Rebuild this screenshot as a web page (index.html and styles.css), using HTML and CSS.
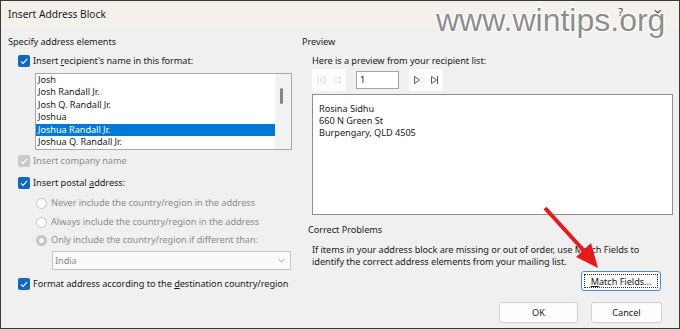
FILE: index.html
```html
<!DOCTYPE html>
<html lang="en">
<head>
    <meta charset="UTF-8">
    <title>Insert Address Block</title>
    <link rel="stylesheet" href="styles.css">
</head>
<body>
    <div class="dialog">
        <div class="titlebar">
            <span class="title">Insert Address Block</span>
            <span class="tb-help">?</span>
            <span class="tb-close">&#x2715;</span>
        </div>

        <div class="content">
            <div class="left">
                <div class="group-label">Specify address elements</div>

                <div class="check-row first">
                    <span class="checkbox"><svg viewBox="0 0 12 12"><path d="M3 6.3 L5.1 8.4 L9.2 3.9"/></svg></span>
                    <span>Insert <u>r</u>ecipient's name in this format:</span>
                </div>

                <div class="listbox">
                    <ul class="items">
                        <li>Josh</li>
                        <li>Josh Randall Jr.</li>
                        <li>Josh Q. Randall Jr.</li>
                        <li>Joshua</li>
                        <li class="selected">Joshua Randall Jr.</li>
                        <li>Joshua Q. Randall Jr.</li>
                    </ul>
                    <div class="scrollbar"><span class="thumb"></span></div>
                </div>

                <div class="check-row company disabled">
                    <span class="checkbox"><svg viewBox="0 0 12 12"><path d="M3 6.3 L5.1 8.4 L9.2 3.9"/></svg></span>
                    <span>Insert company name</span>
                </div>

                <div class="check-row postal">
                    <span class="checkbox"><svg viewBox="0 0 12 12"><path d="M3 6.3 L5.1 8.4 L9.2 3.9"/></svg></span>
                    <span>Insert postal <u>a</u>ddress:</span>
                </div>

                <div class="radio-row r1"><span class="radio"></span><span>Never include the country/region in the address</span></div>
                <div class="radio-row r2"><span class="radio"></span><span>Always include the country/region in the address</span></div>
                <div class="radio-row r3"><span class="radio on"></span><span>Only include the country/region if different than:</span></div>

                <div class="dropdown">
                    <span class="value">India</span>
                    <svg class="chevron" viewBox="0 0 10 6"><path d="M1 1 L5 5 L9 1"/></svg>
                </div>

                <div class="check-row format">
                    <span class="checkbox"><svg viewBox="0 0 12 12"><path d="M3 6.3 L5.1 8.4 L9.2 3.9"/></svg></span>
                    <span>Format address according to the <u>d</u>estination country/region</span>
                </div>
            </div>

            <div class="right">
                <div class="group-label">Preview</div>
                <div class="hint">Here is a preview from your recipient list:</div>

                <div class="nav">
                    <div class="nav-group">
                        <svg viewBox="0 0 34 22" class="off">
                            <path d="M6 7 V15 M13 7 L8 11 L13 15 Z"/>
                            <path d="M28 7 L23 11 L28 15 Z"/>
                        </svg>
                    </div>
                    <div class="record">1</div>
                    <div class="nav-group">
                        <svg viewBox="0 0 34 22" class="on">
                            <path d="M5.5 7.5 L10.5 11 L5.5 14.5 Z"/>
                            <path d="M22.5 7.5 L27.5 11 L22.5 14.5 Z M28.5 7 V15"/>
                        </svg>
                    </div>
                </div>

                <div class="preview">
                    <div>Rosina Sidhu</div>
                    <div>660 N Green St</div>
                    <div>Burpengary, QLD 4505</div>
                </div>

                <div class="group-label problems">Correct Problems</div>
                <p class="para">If items in your address block are missing or out of order, use Match Fields to identify the correct address elements from your mailing list.</p>

                <div class="match-row">
                    <button class="btn match"><span class="focus"><u>M</u>atch Fields...</span></button>
                </div>

                <div class="buttons">
                    <button class="btn">OK</button>
                    <button class="btn cancel">Cancel</button>
                </div>
            </div>
        </div>

        <div class="watermark">www.wintips.org</div>

        <svg class="arrow" width="680" height="329" viewBox="0 0 680 329">
            <line x1="545" y1="208" x2="586" y2="253"/>
            <polygon points="598,268 576,257 591,243"/>
        </svg>
    </div>
</body>
</html>
```

FILE: styles.css
```css
body {
    margin: 0;
    font-family: "Noto Sans", sans-serif;
    font-size: 9.2px;
    letter-spacing: -0.05px;
    color: #1b1b1b;
    background: #f0f0f0;
}
.dialog {
    position: relative;
    width: 680px;
    height: 329px;
    box-sizing: border-box;
    border: 1px solid #3a3a3a;
    background: #f0f0f0;
    display: flex;
    flex-direction: column;
    overflow: hidden;
}
.titlebar {
    height: 27px;
    background: #f4f1ea;
    display: flex;
    align-items: center;
    padding-left: 7px;
}
.title {
    font-size: 10.2px;
    letter-spacing: 0;
    flex: 1;
    margin-top: -1px;
}
.tb-help {
    font-size: 11px;
    color: #444;
    margin-right: 30px;
    margin-top: -6px;
}
.tb-close {
    font-size: 11px;
    color: #444;
    margin-right: 17px;
    margin-top: -4px;
}
.content {
    flex: 1;
    display: flex;
    padding: 8px 0 0 7px;
}
.left {
    width: 284px;
    display: flex;
    flex-direction: column;
}
.right {
    width: 371px;
    margin-left: 10px;
    display: flex;
    flex-direction: column;
}
.group-label {
    height: 12px;
    line-height: 12px;
}
.check-row {
    display: flex;
    align-items: center;
    gap: 3px;
    height: 12px;
    line-height: 12px;
    margin-left: 10px;
    white-space: nowrap;
}
.check-row.first { margin-top: 7px; }
.check-row.company { margin-top: 5px; }
.check-row.postal { margin-top: 10px; }
.check-row.format { margin-top: 8px; }
.check-row.disabled { color: #8c8c8c; }
.checkbox {
    width: 12px;
    height: 12px;
    border-radius: 2px;
    background: #0f67c2;
    flex: none;
    display: flex;
}
.checkbox svg {
    width: 12px;
    height: 12px;
    fill: none;
    stroke: #fff;
    stroke-width: 1.1;
}
.disabled .checkbox { background: #c9c9c9; }
.listbox {
    margin-top: 6px;
    margin-left: 27px;
    width: 257px;
    height: 77px;
    box-sizing: border-box;
    border: 1px solid #a9a9a9;
    background: #fff;
    display: flex;
}
.items {
    list-style: none;
    margin: 0;
    padding: 0;
    flex: 1;
}
.items li {
    height: 12.4px;
    line-height: 12.4px;
    padding-left: 2px;
}
.items li.selected {
    background: #0078d7;
    color: #fff;
}
.scrollbar {
    width: 16px;
    background: #f2f2f2;
    position: relative;
}
.thumb {
    position: absolute;
    left: 5px;
    top: 14px;
    width: 3px;
    height: 16px;
    border-radius: 2px;
    background: #858585;
}
.radio-row {
    display: flex;
    align-items: center;
    gap: 4px;
    height: 12px;
    line-height: 12px;
    margin-left: 28px;
    color: #8c8c8c;
    white-space: nowrap;
}
.r1 { margin-top: 8px; }
.r2 { margin-top: 7px; }
.r3 { margin-top: 6px; }
.radio {
    width: 11px;
    height: 11px;
    box-sizing: border-box;
    border-radius: 50%;
    border: 1px solid #c4c4c4;
    background: #fff;
    flex: none;
}
.radio.on {
    border: 3px solid #c4c4c4;
    background: #f5f5f5;
}
.dropdown {
    margin-top: 5px;
    margin-left: 44px;
    width: 239px;
    height: 19px;
    box-sizing: border-box;
    border: 1px solid #c6c6c6;
    background: #fafafa;
    display: flex;
    align-items: center;
    padding-left: 2px;
}
.dropdown .value {
    flex: 1;
    color: #8a8a8a;
}
.chevron {
    width: 7px;
    height: 5px;
    margin-right: 5px;
    fill: none;
    stroke: #777;
    stroke-width: 1;
}
.hint {
    margin-top: 7px;
    margin-left: 10px;
    height: 12px;
    line-height: 12px;
}
.nav {
    margin-top: 2px;
    margin-left: 10px;
    display: flex;
    align-items: center;
    gap: 10px;
    height: 22px;
}
.nav-group {
    width: 34px;
    height: 22px;
    background: #fdfdfd;
}
.nav-group svg {
    width: 34px;
    height: 22px;
    fill: none;
    stroke-width: 1;
}
.nav-group .off { stroke: #dedede; }
.nav-group .on { stroke: #5a5a5a; }
.record {
    width: 43px;
    height: 18px;
    box-sizing: border-box;
    border: 1px solid #a6a6a6;
    background: #fff;
    line-height: 16px;
    padding-left: 3px;
}
.preview {
    margin-top: 3px;
    margin-left: 10px;
    width: 361px;
    height: 121px;
    box-sizing: border-box;
    border: 1px solid #8f8f8f;
    background: #fff;
    padding: 8px 0 0 6px;
    line-height: 12px;
}
.problems {
    margin-top: 9px;
    margin-left: 6px;
}
.para {
    margin: 8px 0 0 10px;
    width: 345px;
    line-height: 12px;
}
.match-row {
    display: flex;
    justify-content: flex-end;
    margin-top: 3px;
    margin-right: 12px;
}
.btn {
    font-family: inherit;
    font-size: inherit;
    letter-spacing: inherit;
    color: #1b1b1b;
    background: #fdfdfd;
    border: 1px solid #d0d0d0;
    border-radius: 3px;
    padding: 0;
    height: 21px;
    width: 79px;
}
.btn.match {
    width: 80px;
    height: 20px;
    border: 1px solid #3d8ee0;
    padding: 2px;
}
.btn .focus {
    display: flex;
    align-items: center;
    justify-content: center;
    height: 100%;
    border: 1px dotted #333;
    box-sizing: border-box;
}
.buttons {
    display: flex;
    justify-content: flex-end;
    gap: 13px;
    margin-top: 11px;
    margin-right: 11px;
}
.btn.cancel { width: 71px; }
.watermark {
    position: absolute;
    left: 435px;
    top: 1px;
    font-family: "Liberation Sans", Arial, sans-serif;
    font-size: 32px;
    letter-spacing: 0;
    color: #8e8e8e;
    text-shadow: 1px 1px 0 #fff, -1px -1px 0 #fff, 1px -1px 0 #fff, -1px 1px 0 #fff;
}
.arrow {
    position: absolute;
    left: -1px;
    top: -1px;
}
.arrow line {
    stroke: #e8191c;
    stroke-width: 4;
}
.arrow polygon { fill: #e8191c; }
```
